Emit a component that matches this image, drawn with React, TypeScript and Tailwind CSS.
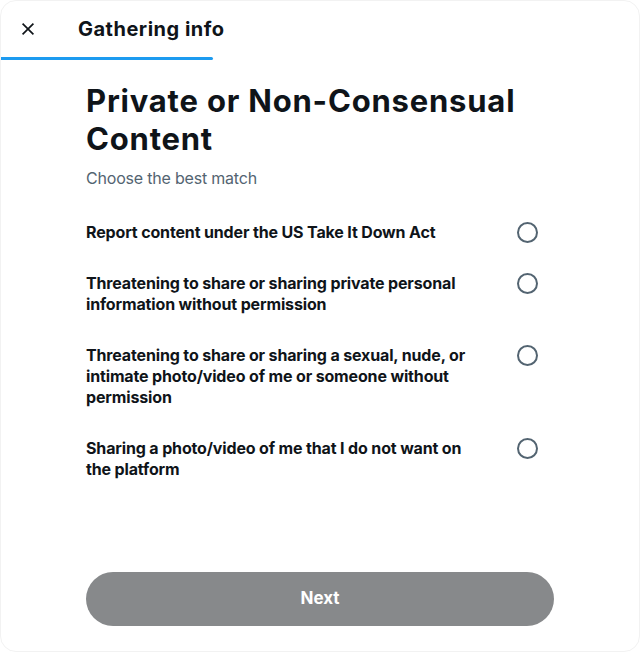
import React, { useState } from "react";

const options = [
  "Report content under the US Take It Down Act",
  "Threatening to share or sharing private personal information without permission",
  "Threatening to share or sharing a sexual, nude, or intimate photo/video of me or someone without permission",
  "Sharing a photo/video of me that I do not want on the platform",
];

const App: React.FC = () => {
  const [selected, setSelected] = useState<number | null>(null);

  return (
    <div className="h-[652px] w-[640px] bg-white font-['Inter','Liberation_Sans',sans-serif] text-[#0f1419]">
      <div className="flex h-[652px] w-[640px] flex-col rounded-[16px] border border-[#f2f2f2] bg-white">
        {/* header */}
        <div className="flex h-[56px] items-center">
          <button className="ml-[11px] flex h-[32px] w-[32px] items-center justify-center">
            <svg viewBox="0 0 24 24" className="h-[20px] w-[20px]" fill="none" stroke="#0f1419" strokeWidth="2">
              <path d="M5.5 5.5l13 13M18.5 5.5l-13 13" />
            </svg>
          </button>
          <h2 className="ml-[34px] text-[20px] font-bold leading-6 tracking-[0.5px]">Gathering info</h2>
        </div>
        <div className="h-[3px] w-[212px] rounded-r-full bg-[#1d9bf0]" />

        <div className="flex flex-1 flex-col px-[85px]">
          <h1 className="mt-[22px] text-[31px] font-bold leading-[38px] tracking-[0.8px]">
            Private or Non-Consensual Content
          </h1>
          <p className="mt-[10px] text-[16px] leading-5 tracking-[-0.2px] text-[#536471]">Choose the best match</p>

          <div className="mt-[34px] flex flex-col">
            {options.map((opt, i) => (
              <label
                key={i}
                onClick={() => setSelected(i)}
                className="flex cursor-pointer items-start justify-between py-[15px] first:pt-0"
              >
                <span className="w-[390px] text-[16px] font-bold leading-[21px] tracking-[-0.15px]">{opt}</span>
                <span className="mr-[16px] flex h-[21px] w-[21px] shrink-0 items-center justify-center rounded-full border-2 border-[#536471]">
                  {selected === i && <span className="h-[11px] w-[11px] rounded-full bg-[#1d9bf0]" />}
                </span>
              </label>
            ))}
          </div>

          <div className="mt-auto mb-[25px]">
            <button className="h-[54px] w-full rounded-full bg-[#87898b] text-[17px] font-bold text-white">
              Next
            </button>
          </div>
        </div>
      </div>
    </div>
  );
};

export default App;
